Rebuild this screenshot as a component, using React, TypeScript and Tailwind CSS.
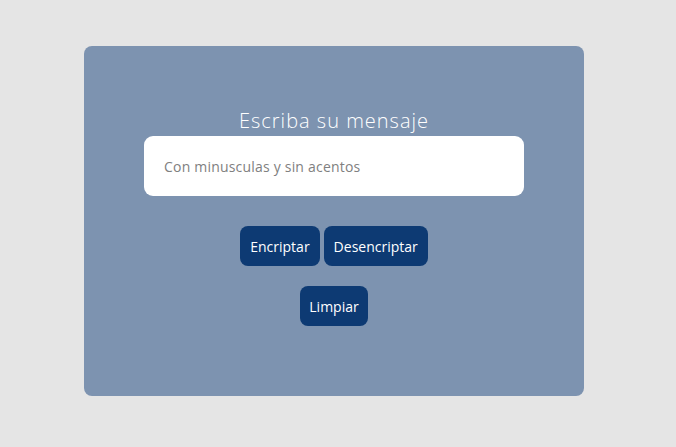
import React from "react";

export default function App() {
  return (
    <div className="min-h-[447px] w-full bg-[#e5e5e5] pt-[46px] pl-[84px]" style={{ fontFamily: '"Open Sans", "Noto Sans", sans-serif' }}>
      <div className="flex h-[350px] w-[500px] flex-col items-center rounded-[8px] bg-[#7d93b0] pt-[60px]">
        <h1 className="text-[20px] font-light leading-[30px] tracking-[1px] text-white">Escriba su mensaje</h1>
        <input
          className="h-[60px] w-[380px] rounded-[9px] bg-white pl-[20px] text-[14px] tracking-[0.2px] text-[#333] outline-none placeholder:text-[#808080]"
          placeholder="Con minusculas y sin acentos"
        />
        <div className="mt-[30px] flex gap-[4px]">
          <button className="h-[40px] rounded-[8px] bg-[#0d3a73] px-[10px] text-[14px] text-white">Encriptar</button>
          <button className="h-[40px] rounded-[8px] bg-[#0d3a73] px-[10px] text-[14px] text-white">Desencriptar</button>
        </div>
        <button className="mt-[20px] h-[40px] w-[68px] rounded-[8px] bg-[#0d3a73] text-[14px] text-white">Limpiar</button>
      </div>
    </div>
  );
}
